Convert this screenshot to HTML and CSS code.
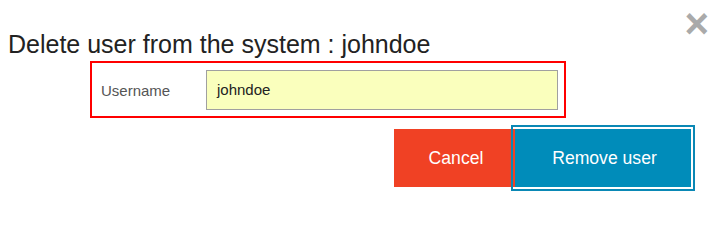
FILE: index.html
```html
<!DOCTYPE html>
<html>
<head>
<meta charset="utf-8">
<link rel="stylesheet" href="styles.css">
</head>
<body>
<div class="modal">
  <a class="close">&times;</a>
  <h2 class="title">Delete user from the system : johndoe</h2>
  <div class="field">
    <label class="label">Username</label>
    <div class="input">johndoe</div>
  </div>
  <div class="actions">
    <button class="btn btn-cancel">Cancel</button>
    <button class="btn btn-remove">Remove user</button>
  </div>
</div>
</body>
</html>
```
FILE: styles.css
```css
html, body {
  margin: 0;
  padding: 0;
  background: #ffffff;
}
body {
  font-family: "Liberation Sans", Arial, sans-serif;
  width: 720px;
  height: 209px;
  overflow: hidden;
}
.modal {
  position: relative;
  padding-top: 29px;
}
.close {
  position: absolute;
  top: 0;
  right: 11px;
  font-size: 42px;
  line-height: normal;
  font-weight: bold;
  color: #aaaaaa;
  cursor: pointer;
}
.title {
  margin: 0 0 2px 0;
  padding-left: 8px;
  font-size: 25px;
  line-height: 30px;
  font-weight: normal;
  color: #222222;
}
.field {
  margin-left: 90px;
  width: 476px;
  box-sizing: border-box;
  border: 2px solid #ff0000;
  padding: 7px 6px 6px 9px;
  display: flex;
  align-items: center;
}
.label {
  width: 105px;
  font-size: 15px;
  color: #555555;
}
.input {
  flex: 1;
  height: 40px;
  box-sizing: border-box;
  border: 1px solid #a0a0a0;
  background: #faffbd;
  padding: 0 10px;
  font-size: 15px;
  line-height: 38px;
  color: #222222;
}
.actions {
  display: flex;
  justify-content: flex-end;
  margin-top: 11px;
  padding-right: 29px;
}
.btn {
  border: none;
  margin: 0;
  height: 58px;
  padding: 0 0 0 3px;
  font-family: "Liberation Sans", Arial, sans-serif;
  font-size: 17.6px;
  color: #ffffff;
  cursor: pointer;
}
.btn-cancel {
  width: 121px;
  background: #f04124;
}
.btn-remove {
  width: 176px;
  background: #008cba;
  outline: 2px solid #0a88b5;
  outline-offset: 2px;
}
```
